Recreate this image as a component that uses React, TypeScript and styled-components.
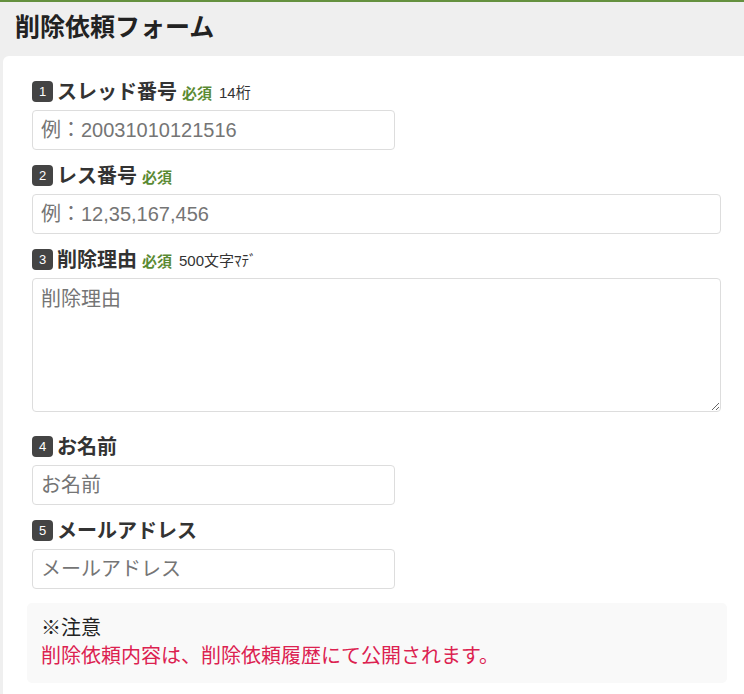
import styled, { createGlobalStyle } from 'styled-components';

const GlobalStyle = createGlobalStyle`
  html, body {
    margin: 0;
    padding: 0;
    background: #efefef;
    font-family: "Liberation Sans", "Noto Sans CJK JP", sans-serif;
    color: #333;
  }
  * { box-sizing: border-box; }
`;

type Field = {
  no: number;
  label: string;
  required?: boolean;
  note?: string;
  placeholder: string;
  wide?: boolean;
  multiline?: boolean;
};

const fields: Field[] = [
  { no: 1, label: 'スレッド番号', required: true, note: '14桁', placeholder: '例：20031010121516' },
  { no: 2, label: 'レス番号', required: true, placeholder: '例：12,35,167,456', wide: true },
  { no: 3, label: '削除理由', required: true, note: '500文字ﾏﾃﾞ', placeholder: '削除理由', wide: true, multiline: true },
  { no: 4, label: 'お名前', placeholder: 'お名前' },
  { no: 5, label: 'メールアドレス', placeholder: 'メールアドレス' },
];

export default function App() {
  return (
    <>
      <GlobalStyle />
      <Page>
        <Header>
          <Title>削除依頼フォーム</Title>
        </Header>
        <Card>
          {fields.map((f) => (
            <FieldGroup key={f.no} $tall={f.multiline}>
              <LabelRow>
                <Badge>{f.no}</Badge>
                <LabelText>{f.label}</LabelText>
                {f.required && <Required>必須</Required>}
                {f.note && <Hint>{f.note}</Hint>}
              </LabelRow>
              {f.multiline ? (
                <TextArea placeholder={f.placeholder} />
              ) : (
                <Input placeholder={f.placeholder} $wide={f.wide} />
              )}
            </FieldGroup>
          ))}
          <Notice>
            <NoticeTitle>※注意</NoticeTitle>
            <NoticeText>削除依頼内容は、削除依頼履歴にて公開されます。</NoticeText>
          </Notice>
        </Card>
      </Page>
    </>
  );
}

/* Styled Components */

const Page = styled.div`
  min-height: 694px;
  border-top: 2px solid #65913f;
  background: #efefef;
`;

const Header = styled.header`
  height: 54px;
  padding: 6px 0 0 15px;
`;

const Title = styled.h1`
  margin: 0;
  font-family: "Noto Sans CJK JP", sans-serif;
  font-size: 25px;
  line-height: 34px;
  font-weight: 700;
  color: #222;
`;

const Card = styled.main`
  margin-left: 3px;
  min-height: 640px;
  background: #fff;
  border-radius: 6px 0 0 0;
  padding: 20px 17px 10px 24px;
`;

const FieldGroup = styled.div<{ $tall?: boolean }>`
  margin: 0 6px ${(p) => (p.$tall ? '19px' : '10px')} 5px;
`;

const LabelRow = styled.div`
  display: flex;
  align-items: center;
  height: 30px;
  margin-bottom: 4px;
`;

const Badge = styled.span`
  display: inline-flex;
  align-items: center;
  justify-content: center;
  width: 21px;
  height: 21px;
  border-radius: 4px;
  background: #444;
  color: #fff;
  font-family: "Liberation Sans", sans-serif;
  font-size: 13px;
  margin-right: 4px;
`;

const LabelText = styled.span`
  font-family: "Noto Sans CJK JP", sans-serif;
  font-size: 20px;
  line-height: 28px;
  font-weight: 700;
  color: #333;
  margin-right: 5px;
`;

const Required = styled.span`
  font-family: "Noto Sans CJK JP", sans-serif;
  font-size: 15px;
  line-height: 20px;
  font-weight: 700;
  color: #5a8a33;
  margin: 3px 7px 0 0;
`;

const Hint = styled.span`
  font-family: "Liberation Sans", "Noto Sans CJK JP", sans-serif;
  font-size: 15px;
  line-height: 20px;
  color: #333;
  margin-top: 3px;
`;

const Input = styled.input<{ $wide?: boolean }>`
  display: block;
  width: ${(p) => (p.$wide ? '100%' : '363px')};
  height: 40px;
  padding: 0 8px;
  border: 1px solid #ddd;
  border-radius: 4px;
  font-family: "Liberation Sans", "Noto Sans CJK JP", sans-serif;
  font-size: 20px;
  color: #333;
  outline: none;

  &::placeholder {
    color: #757575;
  }
`;

const TextArea = styled.textarea`
  display: block;
  width: 100%;
  height: 134px;
  padding: 6px 8px;
  border: 1px solid #ddd;
  border-radius: 4px;
  font-family: "Liberation Sans", "Noto Sans CJK JP", sans-serif;
  font-size: 20px;
  line-height: 28px;
  color: #333;
  outline: none;

  &::placeholder {
    color: #757575;
  }
`;

const Notice = styled.div`
  margin-top: 14px;
  background: #f9f9f9;
  border-radius: 5px;
  padding: 10px 14px 14px;
`;

const NoticeTitle = styled.div`
  font-family: "Noto Sans CJK JP", sans-serif;
  font-size: 20px;
  line-height: 28px;
  color: #222;
`;

const NoticeText = styled.div`
  font-family: "Noto Sans CJK JP", sans-serif;
  font-size: 20px;
  line-height: 28px;
  color: #dc2150;
`;
